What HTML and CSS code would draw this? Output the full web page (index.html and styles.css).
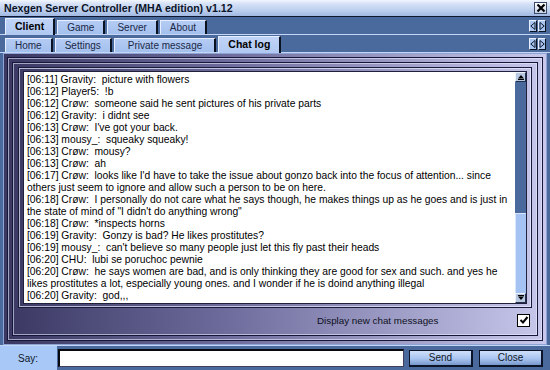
FILE: index.html
```html
<!DOCTYPE html>
<html>
<head>
<meta charset="utf-8">
<link rel="stylesheet" href="styles.css">
</head>
<body>
<div class="window">
  <div class="titlebar">
    <span class="title">Nexgen Server Controller (MHA edition) v1.12</span>
    <span class="close"><svg width="10" height="10" viewBox="0 0 10 10"><path d="M1.5 1.5 L8.5 8.5 M8.5 1.5 L1.5 8.5" stroke="#000" stroke-width="2.2"/></svg></span>
  </div>
  <div class="tabrow">
    <div class="tab active">Client</div>
    <div class="tab">Game</div>
    <div class="tab">Server</div>
    <div class="tab">About</div>
    <div class="arrows">
      <span class="arr"><svg width="6" height="8" viewBox="0 0 6 8"><path d="M5 0.5 L0.8 4 L5 7.5 Z" fill="none" stroke="#10182c" stroke-width="1"/></svg></span>
      <span class="arr"><svg width="6" height="8" viewBox="0 0 6 8"><path d="M1 0.5 L5.2 4 L1 7.5 Z" fill="none" stroke="#10182c" stroke-width="1"/></svg></span>
    </div>
  </div>
  <div class="tabrow">
    <div class="tab">Home</div>
    <div class="tab">Settings</div>
    <div class="tab tab-wide">Private message</div>
    <div class="tab active">Chat log</div>
    <div class="arrows">
      <span class="arr"><svg width="6" height="8" viewBox="0 0 6 8"><path d="M5 0.5 L0.8 4 L5 7.5 Z" fill="none" stroke="#10182c" stroke-width="1"/></svg></span>
      <span class="arr"><svg width="6" height="8" viewBox="0 0 6 8"><path d="M1 0.5 L5.2 4 L1 7.5 Z" fill="none" stroke="#10182c" stroke-width="1"/></svg></span>
    </div>
  </div>
  <div class="panel">
    <div class="frame frame-a">
      <div class="frame frame-b">
        <div class="chatgroup">
          <div class="chatbox">
            <div class="log">
              <div class="msg">[06:11] Gravity:  picture with flowers</div>
              <div class="msg">[06:12] Player5:  !b</div>
              <div class="msg">[06:12] Crøw:  someone said he sent pictures of his private parts</div>
              <div class="msg">[06:12] Gravity:  i didnt see</div>
              <div class="msg">[06:13] Crøw:  I've got your back.</div>
              <div class="msg">[06:13] mousy_:  squeaky squeaky!</div>
              <div class="msg">[06:13] Crøw:  mousy?</div>
              <div class="msg">[06:13] Crøw:  ah</div>
              <div class="msg">[06:17] Crøw:  looks like I'd have to take the issue about gonzo back into the focus of attention... since<br>others just seem to ignore and allow such a person to be on here.</div>
              <div class="msg">[06:18] Crøw:  I personally do not care what he says though, he makes things up as he goes and is just in<br>the state of mind of "I didn't do anything wrong"</div>
              <div class="msg">[06:18] Crøw:  *inspects horns</div>
              <div class="msg">[06:19] Gravity:  Gonzy is bad? He likes prostitutes?</div>
              <div class="msg">[06:19] mousy_:  can't believe so many people just let this fly past their heads</div>
              <div class="msg">[06:20] CHU:  lubi se poruchoc pewnie</div>
              <div class="msg">[06:20] Crøw:  he says women are bad, and is only thinking they are good for sex and such. and yes he<br>likes prostitutes a lot, especially young ones. and I wonder if he is doind anything illegal</div>
              <div class="msg">[06:20] Gravity:  god,,,</div>
            </div>
            <div class="scrollbar">
              <span class="sbtn"><svg width="8" height="6" viewBox="0 0 8 6"><path d="M4 1 L7 4.5 L1 4.5 Z" fill="#000"/><path d="M1 5.5 H7" stroke="#000" stroke-width="1"/></svg></span>
              <span class="track"></span>
              <span class="thumb"></span>
              <span class="sbtn"><svg width="8" height="6" viewBox="0 0 8 6"><path d="M1 0.5 H7" stroke="#000" stroke-width="1"/><path d="M1 1.5 L7 1.5 L4 5 Z" fill="#000"/></svg></span>
            </div>
          </div>
        </div>
        <div class="optrow">
          <span class="optlabel">Display new chat messages</span>
          <span class="checkbox"><svg width="10" height="10" viewBox="0 0 10 10"><path d="M1.5 5 L4 7.5 L8.5 2" fill="none" stroke="#000" stroke-width="2"/></svg></span>
        </div>
      </div>
    </div>
  </div>
  <div class="saybar">
    <span class="saylabel">Say:</span>
    <span class="sayinput"></span>
    <span class="btn send">Send</span>
    <span class="btn">Close</span>
  </div>
</div>
</body>
</html>
```
FILE: styles.css
```css
* { box-sizing: border-box; }
html, body { margin: 0; padding: 0; }
body {
  width: 550px;
  height: 370px;
  overflow: hidden;
  background: #4a6a9e;
  font-family: "Liberation Sans", Arial, sans-serif;
}
.window {
  width: 550px;
  height: 370px;
  display: flex;
  flex-direction: column;
  background: #4a6a9e;
}
.titlebar {
  height: 17px;
  flex: none;
  display: flex;
  align-items: center;
  justify-content: space-between;
  padding: 0 3px 0 4px;
  background: linear-gradient(to bottom, #f2f6fe 0%, #d4e0f6 25%, #bccfee 65%, #a0b8e2 100%);
  border-bottom: 1px solid #0e1830;
}
.title {
  font-size: 10.6px;
  font-weight: bold;
  color: #0c1428;
  line-height: 16px;
}
.close {
  width: 13px;
  height: 12px;
  display: flex;
  align-items: center;
  justify-content: center;
  background: linear-gradient(#ffffff, #c8d4ea);
  border: 1px solid #3a4a66;
}
.tabrow {
  height: 18px;
  flex: none;
  display: flex;
  align-items: flex-end;
  padding-left: 5px;
  border-bottom: 1px solid #c4d6f6;
}
.tab {
  height: 14px;
  margin-right: 2px;
  padding: 0 9px;
  background: linear-gradient(#b4ccf4, #a4c0ee);
  border-top: 1px solid #e6eeff;
  border-left: 1px solid #e6eeff;
  border-right: 2px solid #0a1220;
  font-size: 10px;
  line-height: 13px;
  color: #1a2848;
  white-space: nowrap;
}
.tab-wide { padding: 0 12px 0 13px; }
.tab.active {
  height: 17px;
  margin-bottom: -1px;
  padding: 0 9px;
  font-weight: bold;
  font-size: 10.5px;
  line-height: 15px;
  color: #000;
  background: linear-gradient(#c0d4f6, #b0c8f2);
}
.arrows {
  margin-left: auto;
  margin-right: 4px;
  align-self: center;
  display: flex;
  gap: 1px;
}
.arr {
  width: 8px;
  height: 12px;
  display: flex;
  align-items: center;
  justify-content: center;
  background: #a8c4f0;
  border-top: 1px solid #e6eeff;
  border-left: 1px solid #e6eeff;
  border-right: 1px solid #0a1220;
  border-bottom: 1px solid #0a1220;
}
.panel {
  flex: 1;
  margin: 0 3px;
  display: flex;
  padding: 4px;
  background: linear-gradient(to right, #3a3862 0%, #6c6a9a 40%, #c8c8ec 100%);
  border: 1px solid #8ea4d4;
}
.frame {
  flex: 1;
  display: flex;
  border: 1px solid rgba(230, 236, 255, 0.6);
  box-shadow: 0 0 0 1px #16163a;
}
.frame-a { padding: 4px; }
.frame-b {
  padding: 4px 5px;
  flex-direction: column;
}
.chatgroup {
  flex: none;
  height: 239px;
  padding: 2px 3px;
  border: 1px solid rgba(230, 236, 255, 0.7);
  box-shadow: 0 0 0 1px #1a1a3c;
}
.chatbox {
  height: 233px;
  display: flex;
  background: #fff;
  border: 1px solid #20203c;
}
.log {
  flex: 1;
  padding: 2px 0 0 3px;
  font-size: 10.3px;
  line-height: 12px;
  color: #000;
  overflow: hidden;
}
.msg { white-space: pre; }
.scrollbar {
  width: 11px;
  display: flex;
  flex-direction: column;
  background: #4a6a9e;
}
.sbtn {
  height: 10px;
  flex: none;
  display: flex;
  align-items: center;
  justify-content: center;
  background: #b8c8e0;
  border-top: 1px solid #eef2fa;
  border-left: 1px solid #eef2fa;
  border-right: 1px solid #20304c;
  border-bottom: 1px solid #20304c;
}
.track { flex: 1; }
.thumb {
  height: 80px;
  flex: none;
  background: #a4c2f2;
  border-left: 1px solid #d8e6ff;
  border-top: 1px solid #d8e6ff;
}
.optrow {
  flex: 1;
  display: flex;
  align-items: center;
  padding: 3px 1px 0 0;
}
.optlabel {
  margin-left: 298px;
  font-size: 9.8px;
  color: #0c1020;
}
.checkbox {
  margin-left: auto;
  width: 13px;
  height: 13px;
  display: flex;
  align-items: center;
  justify-content: center;
  background: #fff;
  border: 1px solid #000;
}
.saybar {
  height: 25px;
  flex: none;
  display: flex;
  align-items: center;
  border-top: 1px solid #c4d6f6;
  padding-right: 6px;
}
.saylabel {
  width: 57px;
  align-self: stretch;
  display: flex;
  align-items: center;
  padding-left: 18px;
  background: #a8c8f8;
  font-size: 10px;
  color: #101828;
}
.sayinput {
  width: 346px;
  height: 18px;
  margin-left: 1px;
  background: #fff;
  border-top: 2px solid #080810;
  border-left: 2px solid #080810;
  border-right: 1px solid #40405c;
  border-bottom: 1px solid #40405c;
}
.btn {
  width: 64px;
  height: 17px;
  margin-left: 6px;
  display: flex;
  align-items: center;
  justify-content: center;
  font-size: 10px;
  color: #101828;
  background: linear-gradient(#d0e0fa, #a8c4f0 55%, #7898cc);
  border: 1px solid #0c1428;
  border-right-width: 2px;
  border-bottom-width: 2px;
}
.send { margin-left: 5px; }
```
